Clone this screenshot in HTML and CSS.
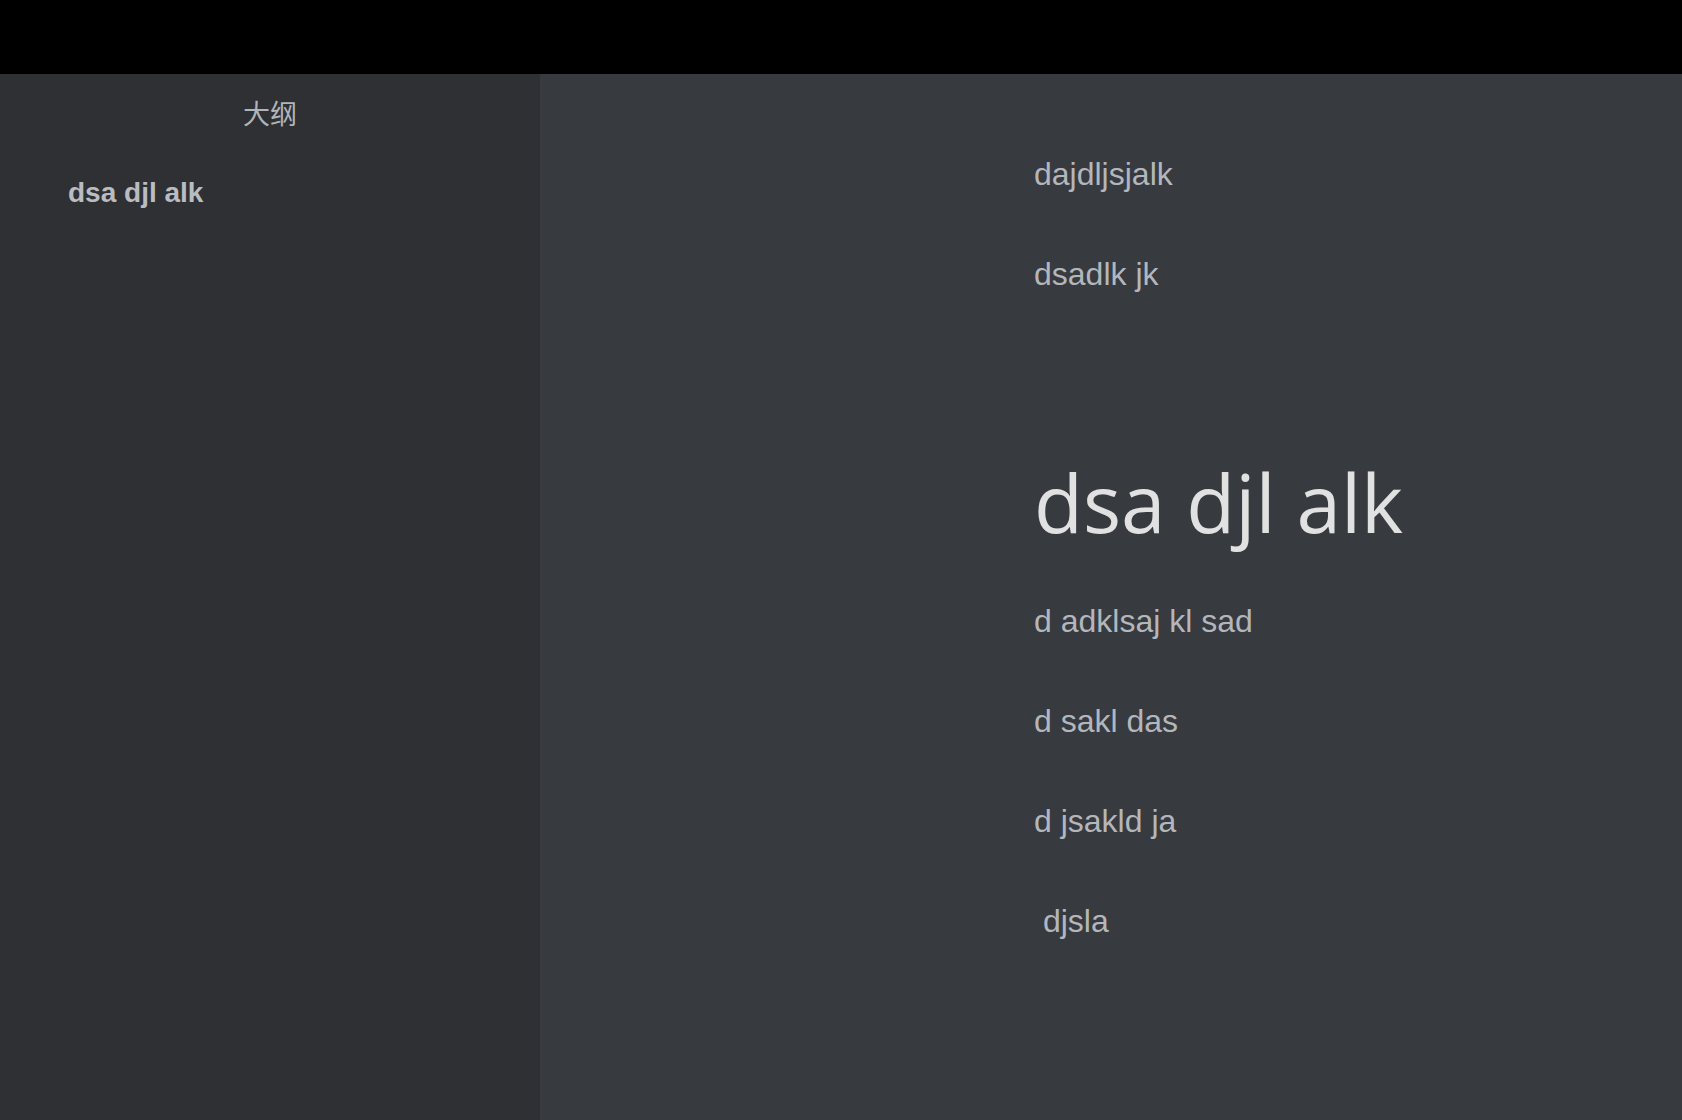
FILE: index.html
```html
<!DOCTYPE html>
<html lang="zh">
<head>
<meta charset="utf-8">
<title>大纲</title>
<link rel="stylesheet" href="styles.css">
</head>
<body>
<div class="topbar"></div>
<div class="app">
  <aside class="sidebar">
    <div class="sidebar-title">大纲</div>
    <ul class="outline">
      <li class="outline-item">dsa djl alk</li>
    </ul>
  </aside>
  <main class="editor">
    <div class="doc">
      <p class="para">dajdljsjalk</p>
      <p class="para">dsadlk jk</p>
      <h1 class="heading">dsa djl alk</h1>
      <p class="para">d adklsaj kl sad</p>
      <p class="para">d sakl das</p>
      <p class="para">d jsakld ja</p>
      <p class="para">&nbsp;djsla</p>
    </div>
  </main>
</div>
</body>
</html>
```

FILE: styles.css
```css
html, body {
  margin: 0;
  padding: 0;
  height: 100%;
  background: #000;
}

body {
  display: flex;
  flex-direction: column;
  font-family: "Liberation Sans", Arial, "Noto Sans CJK SC", sans-serif;
}

.topbar {
  height: 74px;
  flex: 0 0 74px;
  background: #000;
}

.app {
  flex: 1;
  display: flex;
  min-height: 0;
}

.sidebar {
  width: 540px;
  flex: 0 0 540px;
  background: #2e3034;
  padding-top: 19px;
  box-sizing: border-box;
}

.sidebar-title {
  text-align: center;
  font-family: "Noto Sans CJK SC", sans-serif;
  font-size: 27px;
  line-height: 40px;
  color: #b1b4b8;
}

.outline {
  list-style: none;
  margin: 40px 0 0;
  padding: 0 0 0 68px;
}

.outline-item {
  font-family: "Liberation Sans", Arial, sans-serif;
  font-weight: bold;
  font-size: 28px;
  line-height: 40px;
  color: #b9bcc1;
}

.editor {
  flex: 1;
  background: #373a3f;
}

.doc {
  padding: 75px 0 0 494px;
}

.para {
  margin: 0 0 50px;
  font-size: 32px;
  line-height: 50px;
  color: #b3b7bc;
}

.heading {
  margin: 155px 0 46px;
  font-family: "Open Sans", "DejaVu Sans", sans-serif;
  font-weight: normal;
  font-size: 80px;
  line-height: 96px;
  color: #e1e1e1;
}
```
